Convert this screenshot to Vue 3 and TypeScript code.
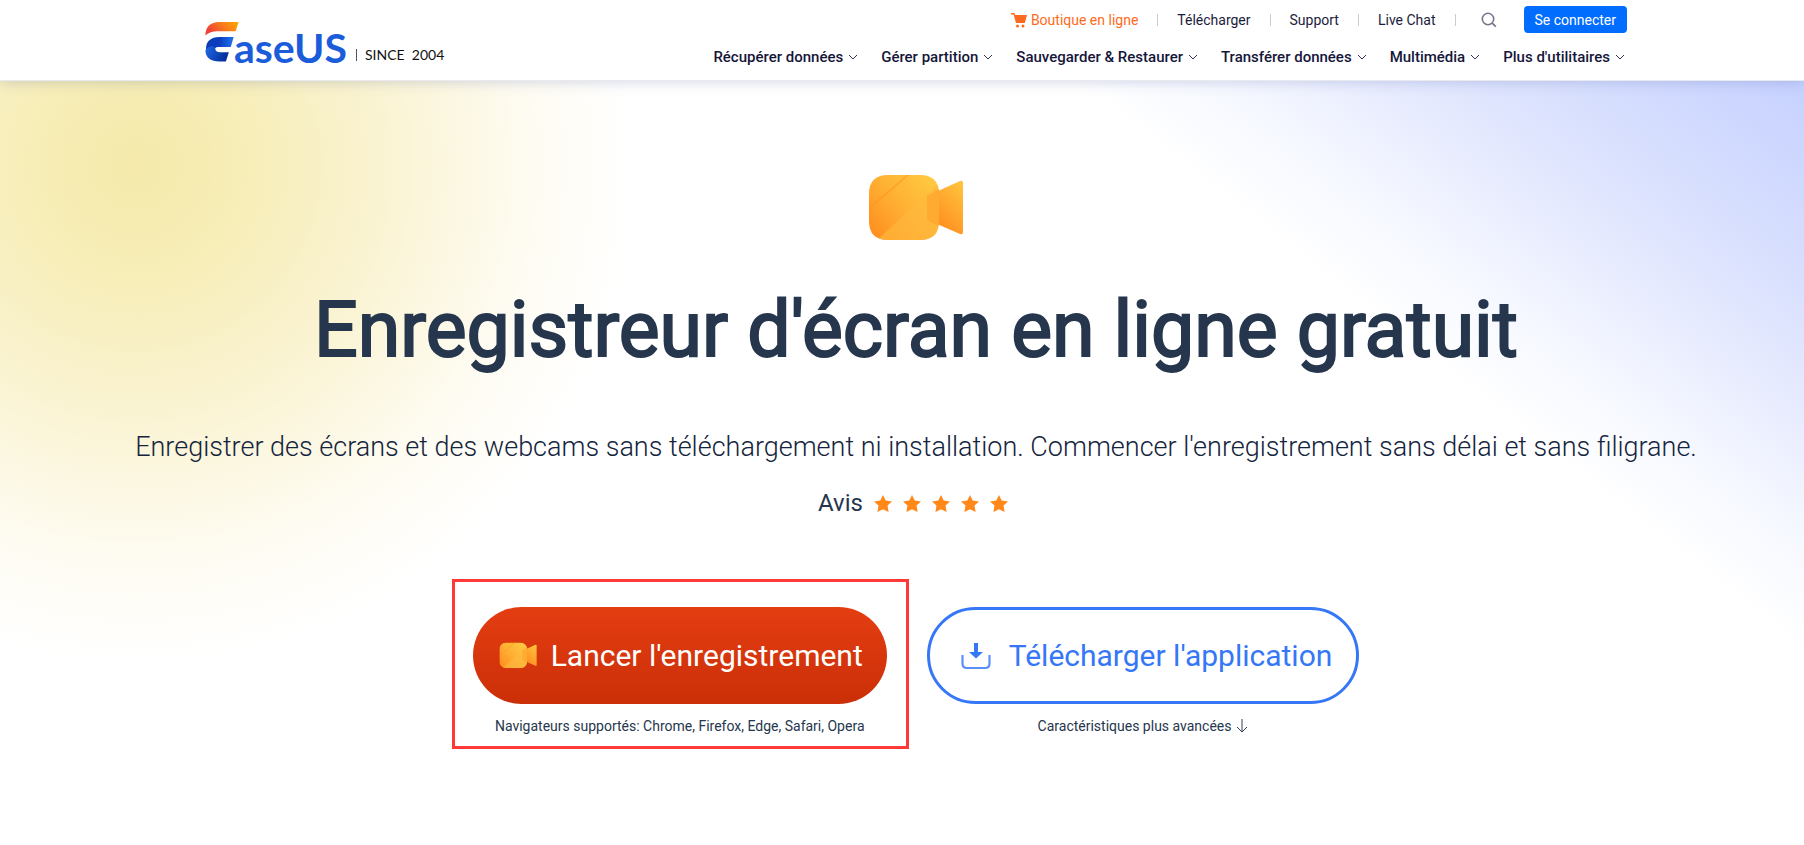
<script setup lang="ts">
interface NavItem {
  label: string
}

const navItems: NavItem[] = [
  { label: 'Récupérer données' },
  { label: 'Gérer partition' },
  { label: 'Sauvegarder & Restaurer' },
  { label: 'Transférer données' },
  { label: 'Multimédia' },
  { label: "Plus d'utilitaires" },
]

const topLinks: string[] = ['Télécharger', 'Support', 'Live Chat']
const stars = 5
</script>

<template>
  <div class="page">
    <header class="header">
      <div class="container header-inner">
        <a class="brand" href="#" aria-label="EaseUS, since 2004">
          <svg class="brand-mark" viewBox="0 0 34 41" aria-hidden="true">
            <defs>
              <linearGradient id="mark-warm" x1="0" x2="1" y1="0.4" y2="0">
                <stop offset="0" stop-color="#ee3f3a" />
                <stop offset="0.5" stop-color="#f97a1c" />
                <stop offset="1" stop-color="#ffa800" />
              </linearGradient>
              <linearGradient id="mark-top" x1="0" x2="1" y1="0" y2="0">
                <stop offset="0" stop-color="#0a3cb4" />
                <stop offset="0.5" stop-color="#0b3fc0" />
                <stop offset="1" stop-color="#2473f0" />
              </linearGradient>
              <linearGradient id="mark-low" x1="0" x2="1" y1="0" y2="0.3">
                <stop offset="0" stop-color="#1f6ae6" />
                <stop offset="1" stop-color="#062f9c" />
              </linearGradient>
            </defs>
            <path d="M0 14C0 5 5 0 14 0H34L31 9.500H14C7 9.500 3 11 0 14Z" fill="url(#mark-warm)" />
            <path d="M1 31C-1 21 5 15.500 14 15.500H29L26 25.500H13C10 25.500 8.500 28 9.500 31L6 36Z" fill="url(#mark-top)" />
            <path d="M0 29C3 24 9 23.500 10 27C10 30 12 31 15 31H24L21 40.500H14C6 40.500 0 37 0 29Z" fill="url(#mark-low)" />
          </svg>
          <span class="brand-name">aseUS</span>
          <span class="brand-rule"></span>
          <span class="brand-since">SINCE&nbsp; 2004</span>
        </a>

        <div class="menus">
          <nav class="top-links" aria-label="Liens rapides">
            <a class="shop" href="#">
              <svg class="cart" viewBox="0 0 16 16" aria-hidden="true">
                <path d="M0 1H3.500L4.200 3H16L13.800 11H5L2.600 2.500H0Z" fill="#ff6a21" />
                <circle cx="6.500" cy="14" r="1.500" fill="#ff6a21" />
                <circle cx="12" cy="14" r="1.500" fill="#ff6a21" />
              </svg>
              Boutique en ligne
            </a>
            <template v-for="link in topLinks" :key="link">
              <span class="rule"></span>
              <a href="#">{{ link }}</a>
            </template>
            <span class="rule"></span>
            <button class="search" type="button" aria-label="Rechercher">
              <svg viewBox="0 0 16 16" aria-hidden="true">
                <circle cx="7" cy="7" r="5.700" fill="none" stroke="#77778c" stroke-width="1.600" />
                <path d="M11.200 11.200L14.800 14.600" stroke="#77778c" stroke-width="1.800" />
              </svg>
            </button>
            <button class="login" type="button">Se connecter</button>
          </nav>
          <nav class="main-nav" aria-label="Produits">
            <a v-for="item in navItems" :key="item.label" href="#">
              {{ item.label }}
              <svg class="chevron" viewBox="0 0 10 6" aria-hidden="true">
                <path d="M1 1L5 5L9 1" fill="none" stroke="#33334f" />
              </svg>
            </a>
          </nav>
        </div>
      </div>
    </header>

    <main class="hero">
      <svg class="hero-icon" viewBox="0 0 96 68" aria-hidden="true">
        <defs>
          <linearGradient id="cam-body" x1="0" x2="1" y1="0.9" y2="0.1">
            <stop offset="0" stop-color="#ff8c1e" />
            <stop offset="0.5" stop-color="#ffb134" />
            <stop offset="1" stop-color="#ffcb42" />
          </linearGradient>
          <linearGradient id="cam-lens" x1="0.8" x2="0.3" y1="0" y2="1">
            <stop offset="0" stop-color="#ffc23c" />
            <stop offset="1" stop-color="#ff8d20" />
          </linearGradient>
          <clipPath id="cam-clip">
            <path d="M20 1H52Q71 1 71 20V47Q71 66 52 66H20Q1 66 1 47V20Q1 1 20 1Z" />
          </clipPath>
        </defs>
        <g id="camera">
          <path d="M70 17L92 7Q95 6 95 9V58Q95 61 92 60L69 50Z" fill="url(#cam-lens)" />
          <g clip-path="url(#cam-clip)">
            <path d="M0 0H71V67H0Z" fill="url(#cam-body)" />
            <path d="M0 34L40 0H42L0 37Z" fill="#ff981f" opacity="0.7" />
            <path d="M8 67L71 9V67Z" fill="#ffb83e" opacity="0.65" />
            <path d="M59 22L71 15V52L62 48Q59 46 59 42Z" fill="#ffa72e" opacity="0.85" />
          </g>
        </g>
      </svg>

      <h1>Enregistreur d'écran en ligne gratuit</h1>
      <p class="lead">
        Enregistrer des écrans et des webcams sans téléchargement ni installation. Commencer l'enregistrement sans délai et sans filigrane.
      </p>

      <div class="rating">
        <span>Avis</span>
        <span class="stars" role="img" aria-label="5 étoiles">
          <svg v-for="n in stars" :key="n" viewBox="0 0 18 17">
            <path d="M9 0L11.700 5.500L18 6.400L13.500 10.600L14.600 17L9 14.200L3.400 17L4.500 10.600L0 6.400L6.300 5.500Z" fill="#ff8818" />
          </svg>
        </span>
      </div>

      <div class="actions">
        <div class="action highlighted">
          <button class="cta primary" type="button">
            <svg class="cta-camera" viewBox="0 0 96 68" aria-hidden="true"><use href="#camera" /></svg>
            Lancer l'enregistrement
          </button>
          <p class="note">Navigateurs supportés: Chrome, Firefox, Edge, Safari, Opera</p>
        </div>
        <div class="action">
          <button class="cta secondary" type="button">
            <svg class="cta-download" viewBox="0 0 30 28" aria-hidden="true">
              <path d="M1.500 13V21.500Q1.500 26 6 26H24Q28.500 26 28.500 21.500V13" fill="none" stroke="#5b8ffb" stroke-width="2.200" />
              <path d="M13 1H17V10H22L15 16.500L8 10H13Z" fill="#3577f7" />
            </svg>
            Télécharger l'application
          </button>
          <a class="note" href="#">
            Caractéristiques plus avancées
            <svg class="arrow" viewBox="0 0 12 14" aria-hidden="true">
              <path d="M6 0V13M1 8L6 13L11 8" fill="none" stroke="#334259" />
            </svg>
          </a>
        </div>
      </div>
    </main>
  </div>
</template>

<style>
body {
  margin: 0;
  background: #fff;
}
</style>

<style scoped>
.page {
  min-height: 100vh;
  display: flex;
  flex-direction: column;
  overflow: hidden;
  font-family: Roboto, "Liberation Sans", sans-serif;
  color: #26364d;
}

a {
  color: inherit;
  text-decoration: none;
}

button {
  font: inherit;
  border: 0;
  padding: 0;
  cursor: pointer;
}

svg {
  display: block;
  flex: none;
}

.header {
  position: relative;
  z-index: 1;
  height: 80px;
  padding-left: 28px;
  background: #fff;
  border-bottom: 1px solid #e9eaf0;
  box-shadow: 0 2px 12px rgba(60, 80, 150, 0.2);
}

.container {
  max-width: 1422px;
  margin: 0 auto;
}

.header-inner {
  display: flex;
  justify-content: space-between;
}

.brand {
  display: flex;
  align-items: flex-end;
  height: 62px;
}

.brand-mark {
  width: 34px;
  height: 40px;
}

.brand-name {
  margin-left: -5px;
  font: 700 41px/40px Lato, sans-serif;
  height: 34px;
  color: #1b5cdb;
}

.brand-rule {
  width: 1px;
  height: 12px;
  margin: 0 8px 1px 9px;
  background: #555;
}

.brand-since {
  font: 14px/14px Lato, sans-serif;
  color: #111;
}

.menus {
  display: flex;
  flex-direction: column;
  align-items: flex-end;
}

.top-links {
  display: flex;
  align-items: center;
  height: 27px;
  margin-top: 6px;
  font-size: 14px;
  color: #1c1c3c;
}

.shop {
  display: flex;
  align-items: center;
  gap: 4px;
  color: #ff6a21;
}

.cart {
  width: 16px;
  height: 16px;
}

.rule {
  width: 1px;
  height: 12px;
  margin: 0 19px;
  background: #ccc;
}

.search {
  margin-left: 6px;
  background: none;
}

.search svg {
  width: 16px;
  height: 16px;
}

.login {
  height: 27px;
  margin-left: 27px;
  padding: 0 11px;
  border-radius: 4px;
  background: #006dff;
  color: #fff;
}

.main-nav {
  display: flex;
  gap: 23px;
  margin-top: 12px;
  padding-right: 2px;
  font-size: 15px;
  line-height: 24px;
  font-weight: 500;
  color: #16163a;
}

.main-nav a {
  display: flex;
  align-items: center;
  gap: 5px;
}

.chevron {
  width: 10px;
  height: 6px;
}

.hero {
  flex: 1;
  display: flex;
  flex-direction: column;
  align-items: center;
  padding: 93px 0 80px 28px;
  background:
    radial-gradient(circle 500px at 136px 84px, #f5eaab 0, rgba(246, 236, 178, 0.93) 22%, rgba(249, 240, 198, 0.78) 50%, rgba(252, 246, 220, 0.4) 78%, rgba(255, 255, 255, 0) 100%),
    linear-gradient(218deg, #c6d1ff 0, #dae1fe 170px, #e8ecfe 270px, #f4f7ff 350px, rgba(255, 255, 255, 0) 450px);
}

.hero-icon {
  width: 96px;
  height: 68px;
}

h1 {
  margin: 40px 0 0;
  font-size: 77px;
  line-height: 96px;
  font-weight: 400;
  -webkit-text-stroke: 2px currentColor;
  white-space: nowrap;
}

.lead {
  margin: 49px 0 0;
  font-size: 27px;
  line-height: 40px;
  font-weight: 300;
  color: #14243c;
  white-space: nowrap;
}

.rating {
  display: flex;
  align-items: center;
  gap: 11px;
  margin-top: 20px;
  padding-right: 6px;
  font-size: 24px;
  line-height: 32px;
}

.stars {
  display: flex;
  gap: 11px;
}

.stars svg {
  width: 18px;
  height: 17px;
}

.actions {
  display: flex;
  gap: 40px;
  margin-top: 88px;
}

.action {
  position: relative;
  display: flex;
  flex-direction: column;
  align-items: center;
}

.highlighted::before {
  content: "";
  position: absolute;
  inset: -28px -22px -13px -21px;
  border: 3px solid #ff3838;
  pointer-events: none;
}

.cta {
  display: flex;
  align-items: center;
  box-sizing: border-box;
  height: 97px;
  border-radius: 49px;
  font-size: 30px;
}

.primary {
  gap: 14px;
  padding: 0 24px 0 26px;
  background: linear-gradient(#e43d12, #cb2f07);
  color: #fff;
}

.secondary {
  gap: 18px;
  padding: 0 24px 0 31px;
  border: 3px solid #3577f7;
  background: #fff;
  color: #3577f7;
}

.cta-camera {
  width: 38px;
  height: 27px;
}

.cta-download {
  width: 30px;
  height: 28px;
}

.note {
  display: flex;
  align-items: center;
  gap: 5px;
  margin: 12px 0 0;
  font-size: 14px;
  line-height: 20px;
}

.arrow {
  width: 12px;
  height: 14px;
}
</style>
